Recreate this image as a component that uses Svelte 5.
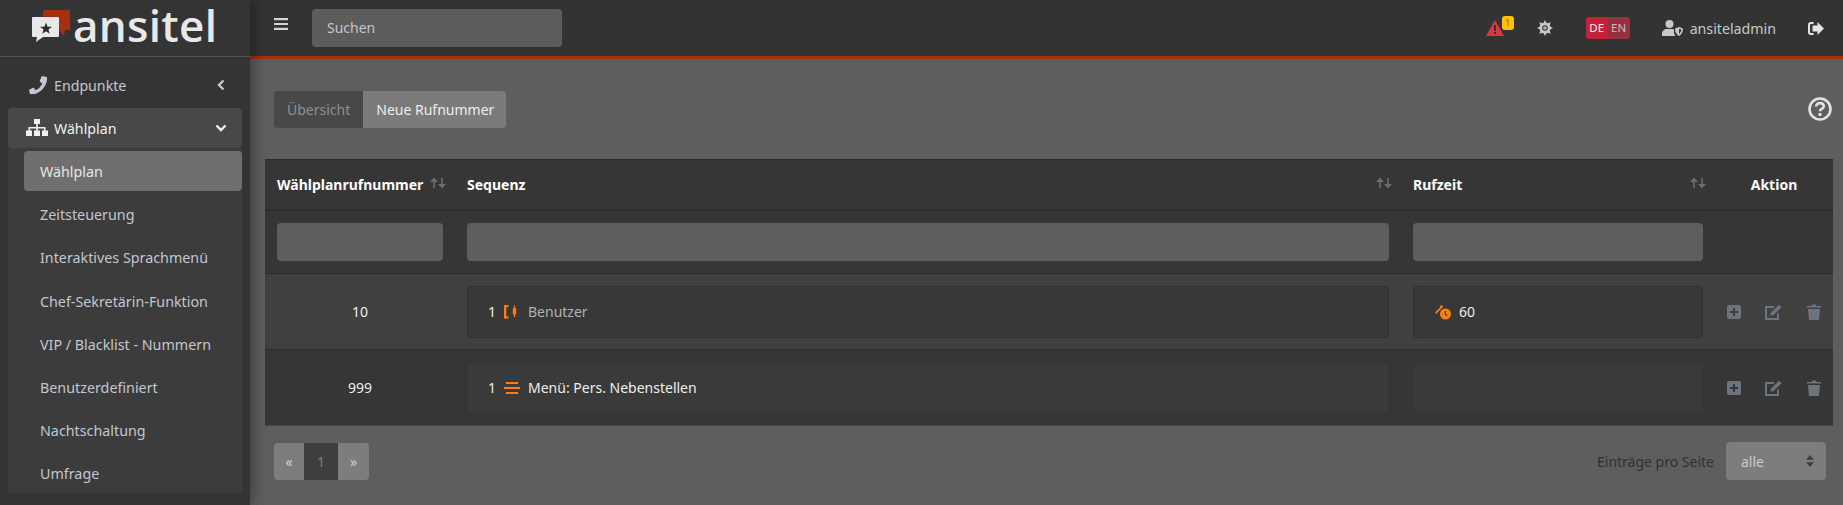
<script lang="ts">
	const subItems = [
		'Wählplan',
		'Zeitsteuerung',
		'Interaktives Sprachmenü',
		'Chef-Sekretärin-Funktion',
		'VIP / Blacklist - Nummern',
		'Benutzerdefiniert',
		'Nachtschaltung',
		'Umfrage'
	];
</script>

{#snippet sortIcon()}
	<svg class="sort" viewBox="0 0 16 12" width="16" height="12">
		<path d="M4 11V3" fill="none" stroke="currentColor" stroke-width="1.600" />
		<path d="M4 .5 8 5H0z" fill="currentColor" />
		<path d="M12 1v8" fill="none" stroke="currentColor" stroke-width="1.600" />
		<path d="M12 11.500 8 7h8z" fill="currentColor" />
	</svg>
{/snippet}

{#snippet rowActions()}
	<div class="actions">
		<svg viewBox="0 0 14 14" width="14" height="14">
			<path fill-rule="evenodd" d="M2 0h10a2 2 0 0 1 2 2v10a2 2 0 0 1-2 2H2a2 2 0 0 1-2-2V2a2 2 0 0 1 2-2zM6 3v3H3v2h3v3h2V8h3V6H8V3z" fill="currentColor" />
		</svg>
		<svg viewBox="0 0 18 16" width="18" height="16">
			<path d="M13 9.500V15H1V3h8" fill="none" stroke="currentColor" stroke-width="2" />
			<path d="M6 8.500 14 .8l2.600 2.500-8 7.700-3.200.7z" fill="currentColor" />
		</svg>
		<svg viewBox="0 0 14 16" width="14" height="16">
			<path d="M0 2h4.500l.7-1.500h3.600L9.500 2H14v1.600H0zM1 5h12l-.9 10a1 1 0 0 1-1 1H2.900a1 1 0 0 1-1-1z" fill="currentColor" />
		</svg>
	</div>
{/snippet}

<div class="shell">
	<aside class="sidebar">
		<div class="brand">
			<svg class="logo" viewBox="0 0 38 32" width="38" height="32">
				<path d="M11 1a1 1 0 0 1 1-1h25a1 1 0 0 1 1 1v19h-5l-1 6-5-6H11z" fill="#a5300f" />
				<path d="M1 7h25a1 1 0 0 1 1 1v18a1 1 0 0 1-1 1H11l-7 5 1-5H1a1 1 0 0 1-1-1V8a1 1 0 0 1 1-1z" fill="#e8e8e8" />
				<path d="m14 12.500 1.500 4.200 4.500.1-3.600 2.700 1.300 4.300-3.700-2.600-3.700 2.600 1.300-4.300L8 16.800l4.500-.1z" fill="#2b2b2b" />
			</svg>
			<span class="wordmark">ansitel</span>
		</div>

		<nav>
			<a class="nav-top" href="#top">
				<svg viewBox="0 0 18 18" width="18" height="18">
					<path d="M17.500 1 13.600.1c-.4-.1-.9.1-1 .5l-1.800 4.200c-.2.400-.1.800.2 1l2.300 1.900a14 14 0 0 1-6.500 6.500L4.900 12c-.3-.3-.7-.4-1-.2L.6 13.600c-.4.100-.6.600-.5 1l.9 3.400c.1.400.5.700.9.700C10.300 18.700 18.200 10.800 18.200 1.900c0-.4-.3-.8-.7-.9z" fill="currentColor" />
				</svg>
				<span>Endpunkte</span>
				<svg class="chev" viewBox="0 0 10 12" width="10" height="12">
					<path d="M7.500 1.500 3 6l4.500 4.500" fill="none" stroke="currentColor" stroke-width="2.400" />
				</svg>
			</a>
			<a class="nav-top open" href="#top">
				<svg viewBox="0 0 22 18" width="22" height="18">
					<path d="M8 0h6v5h-6zM10.200 5h1.600v3h7.700v3.500h-1.600V9.500h-6.100v2h-1.600v-2H4.100v2H2.500V8h7.700zM0 11.500h6v5.500H0zM8 11.500h6v5.500H8zM16 11.500h6v5.500h-6z" fill="currentColor" />
				</svg>
				<span>Wählplan</span>
				<svg class="chev" viewBox="0 0 12 10" width="12" height="10">
					<path d="M1.500 2.500 6 7l4.500-4.500" fill="none" stroke="currentColor" stroke-width="2.400" />
				</svg>
			</a>
			<ul class="sub">
				{#each subItems as item, i}
					<li class:current={i === 0}>{item}</li>
				{/each}
			</ul>
		</nav>
	</aside>

	<div class="main">
		<header class="topbar">
			<svg class="burger" viewBox="0 0 14 12" width="14" height="12">
				<path d="M0 0h14v2.200H0zM0 4.900h14v2.200H0zM0 9.800h14V12H0z" fill="currentColor" />
			</svg>
			<div class="search">Suchen</div>
			<div class="top-right">
				<div class="alert">
					<svg viewBox="0 0 18 16" width="18" height="16">
						<path fill-rule="evenodd" d="M9 0 18 16H0zM8 5v6h2V5zM8 12v2h2v-2z" fill="#dc3545" />
					</svg>
					<span class="badge">1</span>
				</div>
				<svg class="gear" viewBox="0 0 16 16" width="16" height="16">
					<g fill="currentColor">
						<circle cx="8" cy="8" r="5.500" />
						<path d="M8 0l1.500 3h-3zM8 16l-1.500-3h3zM0 8l3-1.500v3zM16 8l-3 1.500v-3zM2.300 2.300l3.200 1-2.200 2.200zM13.700 13.700l-3.200-1 2.200-2.200zM13.700 2.300l-1 3.200-2.200-2.200zM2.300 13.700l1-3.200 2.200 2.200z" />
					</g>
					<circle cx="8" cy="8" r="2.800" fill="#333" />
					<circle cx="8" cy="8" r="1.800" fill="#b0b0b0" />
				</svg>
				<div class="lang"><span class="de">DE</span><span class="en">EN</span></div>
				<div class="user">
					<svg viewBox="0 0 21 16" width="21" height="16">
						<circle cx="7.500" cy="4" r="4" fill="currentColor" />
						<path d="M0 16v-2c0-3 2-5 5-5h5c1 0 1.500.2 2 .5V12c0 1.500.7 3 1.500 4z" fill="currentColor" />
						<path d="M17 7l4 1.500c0 3.500-1.500 6-4 7.500-2.500-1.500-4-4-4-7.500z" fill="currentColor" />
						<path d="M17 9v5c1.300-1 2.200-2.500 2.400-4.400z" fill="#333" />
					</svg>
					<span>ansiteladmin</span>
				</div>
				<svg class="logout" viewBox="0 0 16 13" width="16" height="13">
					<path d="M5.500 1H3a2 2 0 0 0-2 2v7a2 2 0 0 0 2 2h2.500" fill="none" stroke="currentColor" stroke-width="2" />
					<path d="M9.500 0 16 6.500 9.500 13V9.500H4.500v-6h5z" fill="currentColor" />
				</svg>
			</div>
		</header>

		<main class="content">
			<div class="toolbar">
				<div class="tabs">
					<span class="tab">Übersicht</span>
					<span class="tab active">Neue Rufnummer</span>
				</div>
				<svg class="help" viewBox="0 0 24 24" width="24" height="24">
					<circle cx="12" cy="12" r="10.500" fill="none" stroke="currentColor" stroke-width="2.600" />
					<path d="M8.200 9.500c0-2.200 1.700-3.400 3.800-3.400s3.800 1.200 3.800 3.200c0 2.800-3.800 2.500-3.800 5" fill="none" stroke="currentColor" stroke-width="2.600" />
					<rect x="10.500" y="16" width="3" height="3" fill="currentColor" />
				</svg>
			</div>

			<table>
				<colgroup>
					<col style="width:190px" />
					<col />
					<col style="width:314px" />
					<col style="width:118px" />
				</colgroup>
				<thead>
					<tr class="head">
						<th><div class="th-in"><span>Wählplanrufnummer</span>{@render sortIcon()}</div></th>
						<th><div class="th-in"><span>Sequenz</span>{@render sortIcon()}</div></th>
						<th><div class="th-in"><span>Rufzeit</span>{@render sortIcon()}</div></th>
						<th class="center">Aktion</th>
					</tr>
					<tr class="filters">
						<td><div class="filter"></div></td>
						<td><div class="filter"></div></td>
						<td><div class="filter"></div></td>
						<td></td>
					</tr>
				</thead>
				<tbody>
					<tr class="odd">
						<td class="center">10</td>
						<td>
							<div class="cellbox">
								<span class="idx">1</span>
								<svg class="ico" viewBox="0 0 16 16" width="16" height="16">
									<path d="M0 1h4.500v2H2.300v9.500h2.200v2H0z M9.800 1.500h1.400v2.700h1v6h-1V13H9.800v-2.800h-1v-6h1z" fill="#fd7e14" />
								</svg>
								<span class="muted">Benutzer</span>
							</div>
						</td>
						<td>
							<div class="cellbox time">
								<svg class="ico" viewBox="0 0 16 16" width="16" height="16">
									<path d="M0 8.500 6.500 2l1.200 1L3 8 1.500 10z" fill="#fd7e14" />
									<circle cx="6.500" cy="2.500" r="1.300" fill="#fd7e14" />
									<circle cx="10.500" cy="10" r="5.500" fill="#fd7e14" />
									<path d="M10.300 7v3.200l2 1.500" fill="none" stroke="#3a3a3a" stroke-width="1.200" />
								</svg>
								<span>60</span>
							</div>
						</td>
						<td>{@render rowActions()}</td>
					</tr>
					<tr class="even">
						<td class="center">999</td>
						<td>
							<div class="cellbox">
								<span class="idx">1</span>
								<svg class="ico" viewBox="0 0 16 12" width="16" height="12">
									<path d="M2 0h12v2H2zM0 5h16v2H0zM2 10h12v2H2z" fill="#fd7e14" />
								</svg>
								<span>Menü: Pers. Nebenstellen</span>
							</div>
						</td>
						<td><div class="cellbox"></div></td>
						<td>{@render rowActions()}</td>
					</tr>
				</tbody>
			</table>

			<div class="footer">
				<div class="pager">
					<span class="pg">«</span>
					<span class="pg num">1</span>
					<span class="pg">»</span>
				</div>
				<div class="per-page">
					<span>Einträge pro Seite</span>
					<div class="select">
						alle
						<svg viewBox="0 0 8 12" width="8" height="12">
							<path d="M4 0l4 4.800H0zM4 12 0 7.200h8z" fill="#3a3f45" />
						</svg>
					</div>
				</div>
			</div>
		</main>
	</div>
</div>

<style>
	:global(body) {
		margin: 0;
		background: #5e5e5e;
		font-family: 'Noto Sans', 'Open Sans', sans-serif;
		font-size: 15px;
		overflow: hidden;
	}

	.shell {
		display: flex;
		height: 505px;
		overflow: hidden;
	}

	.sidebar {
		width: 250px;
		flex: none;
		background: #343434;
		box-shadow: 4px 0 12px rgba(0, 0, 0, 0.3);
		z-index: 2;
	}

	.brand {
		height: 57px;
		box-sizing: border-box;
		border-bottom: 1px solid #4b545c;
		display: flex;
		align-items: flex-start;
		padding: 10px 0 0 32px;
		gap: 3px;
	}

	.wordmark {
		font-family: 'Open Sans', sans-serif;
		font-weight: 600;
		font-size: 44px;
		line-height: 60px;
		letter-spacing: 0.3px;
		color: #e8e8e8;
		margin-top: -15px;
	}

	nav {
		padding: 8px 8px 0;
	}

	.nav-top {
		display: flex;
		align-items: center;
		height: 40px;
		padding: 0 16px 0 21px;
		gap: 7px;
		color: #c2c7d0;
		text-decoration: none;
		margin-bottom: 3px;
		border-radius: 4px;
		font-size: 14.200px;
	}

	.nav-top .chev {
		margin-left: auto;
	}

	.nav-top.open {
		background: #484848;
		color: #f0f0f0;
		padding: 0 15px 0 18px;
		gap: 6px;
		margin-bottom: 0;
	}

	.sub {
		list-style: none;
		margin: 0;
		padding: 3px 0 0 16px;
		background: #3c3c3c;
		height: 345px;
		box-sizing: border-box;
	}

	.sub li {
		height: 40px;
		line-height: 42px;
		padding-left: 16px;
		margin-bottom: 3.200px;
		color: #c2c7d0;
		border-radius: 4px;
		font-size: 14.300px;
	}

	.sub li.current {
		background: #6f6f6f;
		color: #e4e6ea;
	}

	.main {
		flex: 1;
		min-width: 0;
		display: flex;
		flex-direction: column;
	}

	.topbar {
		height: 59px;
		box-sizing: border-box;
		background: #333;
		border-bottom: 3px solid #a5300f;
		display: flex;
		align-items: center;
		padding: 0 19px 0 24px;
		color: #d4d4d4;
		flex: none;
	}

	.burger {
		margin-top: -8px;
	}

	.search {
		width: 250px;
		height: 38px;
		margin-left: 24px;
		padding-left: 15px;
		box-sizing: border-box;
		background: #5c5c5c;
		border-radius: 4px;
		line-height: 38px;
		color: #c2c4c6;
		font-size: 14px;
	}

	.top-right {
		margin-left: auto;
		display: flex;
		align-items: center;
		color: #c8c8c8;
	}

	.alert {
		position: relative;
		width: 18px;
		height: 16px;
	}

	.badge {
		position: absolute;
		left: 16px;
		top: -4px;
		width: 12px;
		height: 14px;
		border-radius: 3px;
		background: #ffc107;
		color: #8a6d0a;
		font-size: 9px;
		line-height: 14px;
		text-align: center;
	}

	.gear {
		margin-left: 33px;
	}

	.lang {
		margin-left: 33px;
		display: flex;
		border-radius: 3px;
		overflow: hidden;
		font-size: 11.500px;
		line-height: 22px;
		height: 22px;
	}

	.lang span {
		width: 22px;
		text-align: center;
	}

	.de {
		background: #c8203a;
		color: #f3f3f3;
	}

	.en {
		background: #97313f;
		color: #d0b8bc;
	}

	.user {
		margin-left: 32px;
		display: flex;
		align-items: center;
		gap: 7px;
		font-size: 14.200px;
	}

	.logout {
		margin-left: 32px;
		color: #e4e4e4;
	}

	.content {
		flex: 1;
		padding: 0 10px 0 15px;
		background: #5e5e5e;
	}

	.toolbar {
		display: flex;
		justify-content: space-between;
		align-items: center;
		height: 100px;
		padding-left: 9px;
		box-sizing: border-box;
	}

	.tabs {
		display: flex;
		height: 37px;
		border-radius: 4px;
		overflow: hidden;
		font-size: 14px;
	}

	.tab {
		line-height: 37px;
		padding: 0 13px;
		background: #484848;
		color: #8f8f8f;
	}

	.tab.active {
		background: #7b7b7b;
		color: #eee;
		padding: 0 12px 0 13px;
	}

	.help {
		color: #e2e2e2;
		margin-right: 1px;
	}

	table {
		width: 100%;
		table-layout: fixed;
		border-collapse: collapse;
		color: #eee;
		font-size: 14px;
	}

	th,
	td {
		padding: 0 12px;
		box-sizing: border-box;
	}

	.head {
		height: 50px;
		background: #363636;
		border-top: 1px solid #2d2d2d;
		border-bottom: 2px solid #2d2d2d;
	}

	th {
		font-weight: 700;
		text-align: left;
		color: #fff;
		font-size: 14px;
	}

	.th-in {
		display: flex;
		justify-content: space-between;
		align-items: center;
	}

	.sort {
		color: #6c6c6c;
		flex: none;
		margin: -3px -3px 0 0;
	}

	.center {
		text-align: center;
	}

	.filters {
		height: 64px;
		background: #363636;
		border-bottom: 1px solid #2d2d2d;
	}

	.filter {
		height: 38px;
		background: #5e5e5e;
		border-radius: 4px;
	}

	.odd {
		height: 76px;
		background: #404040;
		border-bottom: 1px solid #2d2d2d;
	}

	.even {
		height: 76px;
		background: #363636;
		border-bottom: 1px solid #484848;
	}

	.cellbox {
		height: 50px;
		display: flex;
		align-items: center;
		padding-left: 20px;
		box-sizing: border-box;
		border-radius: 4px;
		background: #3a3a3a;
		border: 1px solid #363636;
	}

	.odd .cellbox {
		height: 52px;
		background: #383838;
		border-color: #303030;
	}

	.cellbox.time {
		padding-left: 21px;
	}

	.idx {
		width: 16px;
	}

	.ico {
		margin-right: 8px;
		flex: none;
	}

	.muted {
		color: #aeb2b6;
	}

	.actions {
		display: flex;
		align-items: center;
		justify-content: space-between;
		color: #6c757d;
	}

	.footer {
		display: flex;
		justify-content: space-between;
		align-items: center;
		padding: 16px 7px 0 9px;
	}

	.pager {
		display: flex;
		height: 37px;
		font-size: 14px;
		border-radius: 4px;
		overflow: hidden;
	}

	.pg {
		width: 30px;
		line-height: 37px;
		text-align: center;
		background: #7d7d7d;
		color: #d0d0d0;
	}

	.pg:last-child {
		width: 31px;
	}

	.pg.num {
		width: 34px;
		background: #3e3e3e;
		color: #7f7f7f;
	}

	.per-page {
		display: flex;
		align-items: center;
		gap: 12px;
		color: #2e3236;
		font-size: 14px;
	}

	.select {
		width: 100px;
		height: 38px;
		box-sizing: border-box;
		padding: 0 12px 0 15px;
		display: flex;
		align-items: center;
		justify-content: space-between;
		background: #7d7d7d;
		border-radius: 4px;
		color: #c8ccd0;
	}
</style>
